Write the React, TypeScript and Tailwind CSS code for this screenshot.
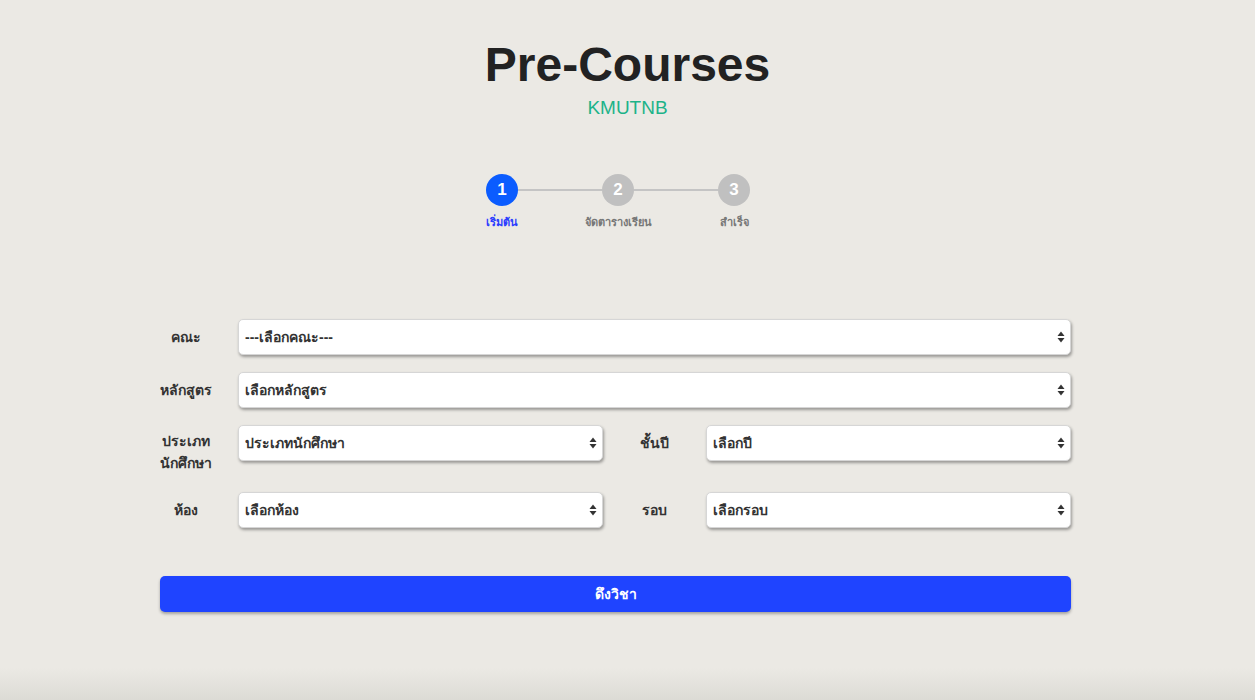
import React from 'react';

const SelectArrow = () => (
  <svg width="8" height="13" viewBox="0 0 8 13" className="pointer-events-none absolute right-[6px] top-1/2 -translate-y-1/2">
    <path d="M4 1 L7.5 5.5 L0.5 5.5 Z" fill="#333" />
    <path d="M4 12 L7.5 7.5 L0.5 7.5 Z" fill="#333" />
  </svg>
);

const Field = ({ placeholder }: { placeholder: string }) => (
  <div className="relative flex-1">
    <select
      defaultValue=""
      className="w-full h-[36px] appearance-none rounded-[5px] border border-[#d6d6d6] bg-white pl-[6px] pr-6 text-[14px] font-semibold text-[#333] shadow-[1px_2px_3px_rgba(0,0,0,0.35)] outline-none"
    >
      <option value="">{placeholder}</option>
    </select>
    <SelectArrow />
  </div>
);

const Label = ({ children }: { children: React.ReactNode }) => (
  <div className="w-[52px] mr-[26px] shrink-0 text-center text-[14px] font-bold leading-[22px] text-[#333]">
    {children}
  </div>
);

const steps = [
  { n: 1, label: 'เริ่มต้น', active: true },
  { n: 2, label: 'จัดตารางเรียน', active: false },
  { n: 3, label: 'สำเร็จ', active: false },
];

export default function App() {
  return (
    <div
      className="min-h-screen bg-[linear-gradient(to_bottom,#ebe9e4_0,#ebe9e4_668px,#dcdbd5_700px)] pt-[41px]"
      style={{ fontFamily: '"Liberation Sans", "Noto Sans", "DejaVu Sans", sans-serif' }}
    >
      {/* header */}
      <div className="text-center">
        <h1 className="text-[48px] leading-[48px] font-bold text-[#222]">Pre-Courses</h1>
        <div className="mt-[8px] text-[19px] leading-[22px] text-[#1db389]">KMUTNB</div>
      </div>

      {/* stepper */}
      <div className="w-[367px] mx-auto pr-[19px] mt-[55px]">
        <div className="px-[42px] flex items-center">
          <div className="w-[32px] h-[32px] rounded-full bg-[#0b5cff] text-white font-bold text-[17px] flex items-center justify-center">1</div>
          <div className="flex-1 h-[2px] bg-[#c4c4c4]" />
          <div className="w-[32px] h-[32px] rounded-full bg-[#c0c0c0] text-white font-bold text-[17px] flex items-center justify-center">2</div>
          <div className="flex-1 h-[2px] bg-[#c4c4c4]" />
          <div className="w-[32px] h-[32px] rounded-full bg-[#c0c0c0] text-white font-bold text-[17px] flex items-center justify-center">3</div>
        </div>
        <div className="flex mt-[8px]">
          {steps.map((s) => (
            <div
              key={s.n}
              className={`w-[116px] text-center text-[11px] leading-[16px] font-semibold ${s.active ? 'text-[#2a3cff]' : 'text-[#777]'}`}
            >
              {s.label}
            </div>
          ))}
        </div>
      </div>

      {/* form */}
      <div className="w-[935px] mx-auto pr-[24px] mt-[89px]">
        <div className="flex items-center">
          <Label>คณะ</Label>
          <Field placeholder="---เลือกคณะ---" />
        </div>
        <div className="flex items-center mt-[17px]">
          <Label>หลักสูตร</Label>
          <Field placeholder="เลือกหลักสูตร" />
        </div>
        <div className="flex items-start mt-[17px] gap-[25px]">
          <div className="flex flex-1 items-start">
            <div className="pt-[5px]">
              <Label>
                ประเภท
                <br />
                นักศึกษา
              </Label>
            </div>
            <Field placeholder="ประเภทนักศึกษา" />
          </div>
          <div className="flex flex-1 items-center">
            <Label>ชั้นปี</Label>
            <Field placeholder="เลือกปี" />
          </div>
        </div>
        <div className="flex items-center mt-[18px] gap-[25px]">
          <div className="flex flex-1 items-center">
            <Label>ห้อง</Label>
            <Field placeholder="เลือกห้อง" />
          </div>
          <div className="flex flex-1 items-center">
            <Label>รอบ</Label>
            <Field placeholder="เลือกรอบ" />
          </div>
        </div>

        <button className="mt-[48px] w-full h-[36px] rounded-[5px] bg-[#1f44ff] text-white text-[14px] font-bold shadow-[0_2px_3px_rgba(0,0,0,0.3)]">
          ดึงวิชา
        </button>
      </div>
    </div>
  );
}
